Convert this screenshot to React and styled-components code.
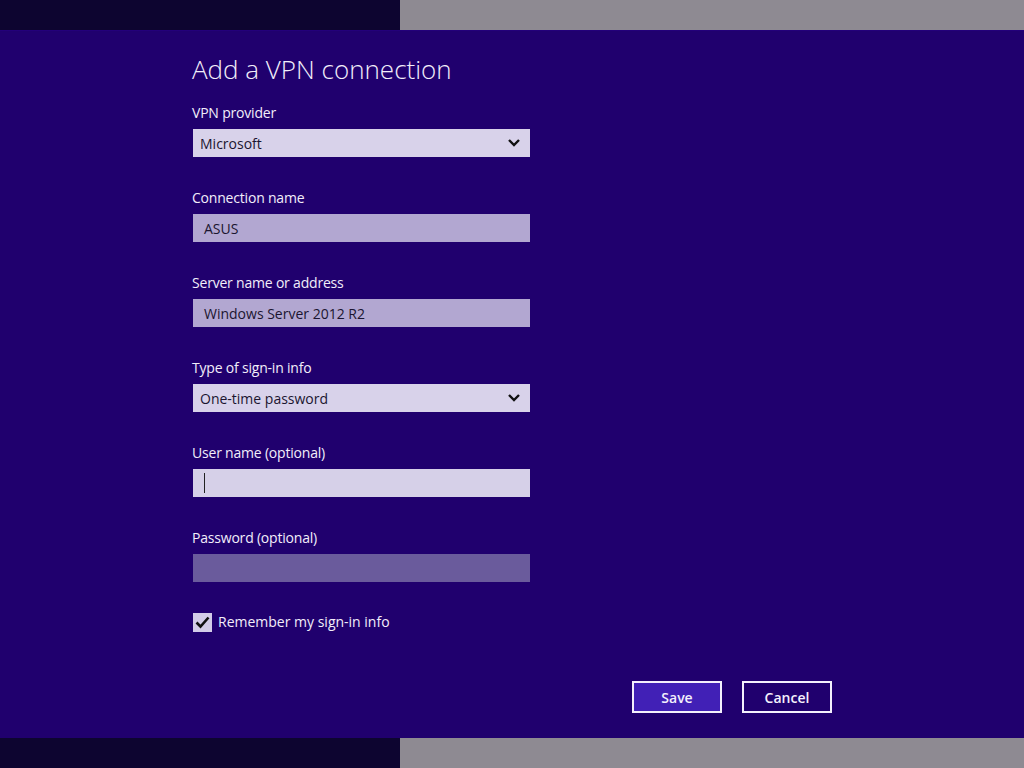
import React from "react"
import styled, { createGlobalStyle } from "styled-components"

const GlobalStyles = createGlobalStyle`
  html, body {
    margin: 0;
    padding: 0;
    height: 100%;
  }
  body {
    font-family: "Open Sans", "Noto Sans", sans-serif;
    background: #20006e;
  }
`

const Page = styled.div`
  width: 1024px;
  height: 768px;
  display: flex;
  flex-direction: column;
`

const Band = styled.div`
  height: 30px;
  display: flex;
  flex-shrink: 0;
`

const BandPart = styled.div`
  flex: ${(p) => (p.dark ? "0 0 400px" : "1")};
  background: ${(p) => (p.dark ? "#0d0530" : "#8e8a92")};
`

const Panel = styled.div`
  flex: 1;
  background: #20006e;
  border-top: 1px solid #23007a;
  padding: 20px 0 0 192px;
  color: #f2eefa;
`

const Title = styled.h1`
  margin: 0 0 16px;
  font-size: 26px;
  line-height: 36px;
  font-weight: 300;
`

const Field = styled.div`
  margin-bottom: 31px;
  width: 338px;
`

const Label = styled.div`
  font-size: 14px;
  line-height: 20px;
  letter-spacing: -0.2px;
  margin-bottom: 6px;
`

const Box = styled.div`
  height: 28px;
  margin-left: 1px;
  width: 337px;
  box-sizing: border-box;
  display: flex;
  align-items: center;
  justify-content: space-between;
  padding: 0 ${(p) => (p.select ? "9px 0 7px" : "11px")};
  font-size: 14px;
  color: #1b1530;
  background: ${(p) => p.bg};
`

const Caret = styled.span`
  width: 1px;
  height: 20px;
  background: #222;
`

const CheckRow = styled.div`
  display: flex;
  align-items: center;
  gap: 6px;
  margin-left: 1px;
  margin-top: -1px;
  font-size: 14px;
  line-height: 20px;
`

const CheckBox = styled.div`
  width: 19px;
  height: 19px;
  background: #d3cce8;
  display: flex;
  align-items: center;
  justify-content: center;
`

const Buttons = styled.div`
  width: 640px;
  display: flex;
  justify-content: flex-end;
  gap: 20px;
  margin-top: 49px;
`

const Button = styled.button`
  width: 90px;
  height: 32px;
  box-sizing: border-box;
  border: 2px solid #f4f0fc;
  background: ${(p) => (p.primary ? "#4120b6" : "#20006e")};
  color: #f4f0fc;
  font-family: "Open Sans", "Noto Sans", sans-serif;
  font-weight: 600;
  font-size: 14px;
  padding: 0;
`

const Chevron = () => (
  <svg width="14" height="10" viewBox="0 0 14 10">
    <polyline
      points="2,2 7,7 12,2"
      fill="none"
      stroke="#111"
      strokeWidth="2.4"
    />
  </svg>
)

const Select = ({ value }) => (
  <Box select bg="#d8d2ea">
    <span>{value}</span>
    <Chevron />
  </Box>
)

const App = () => {
  return (
    <>
      <GlobalStyles />
      <Page>
        <Band>
          <BandPart dark />
          <BandPart />
        </Band>
        <Panel>
          <Title>Add a VPN connection</Title>
          <Field>
            <Label>VPN provider</Label>
            <Select value="Microsoft" />
          </Field>
          <Field>
            <Label>Connection name</Label>
            <Box bg="#b2a7d1">ASUS</Box>
          </Field>
          <Field>
            <Label>Server name or address</Label>
            <Box bg="#b2a7d1">Windows Server 2012 R2</Box>
          </Field>
          <Field>
            <Label>Type of sign-in info</Label>
            <Select value="One-time password" />
          </Field>
          <Field>
            <Label>User name (optional)</Label>
            <Box bg="#d6d0e8">
              <Caret />
            </Box>
          </Field>
          <Field>
            <Label>Password (optional)</Label>
            <Box bg="#6a5b9c" />
          </Field>
          <CheckRow>
            <CheckBox>
              <svg width="15" height="13" viewBox="0 0 15 13">
                <polyline
                  points="1.5,6.5 5.5,10.5 13.5,1.5"
                  fill="none"
                  stroke="#111"
                  strokeWidth="2.6"
                />
              </svg>
            </CheckBox>
            Remember my sign-in info
          </CheckRow>
          <Buttons>
            <Button primary>Save</Button>
            <Button>Cancel</Button>
          </Buttons>
        </Panel>
        <Band>
          <BandPart dark />
          <BandPart />
        </Band>
      </Page>
    </>
  )
}

export default App
